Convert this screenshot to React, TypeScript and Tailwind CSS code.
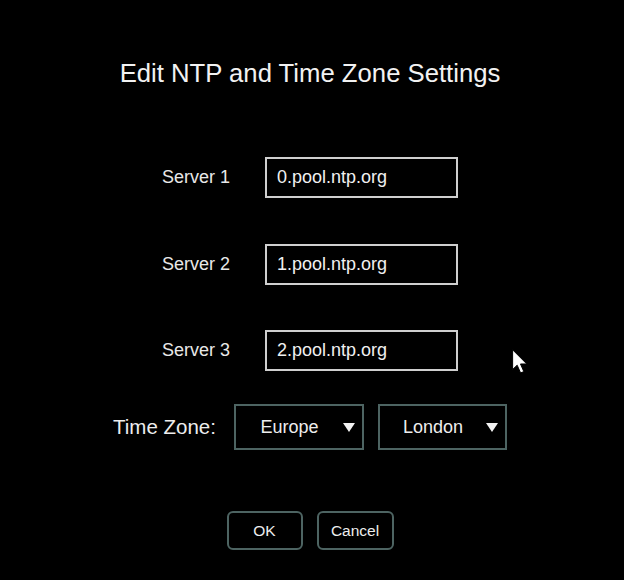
import React from "react";

const servers = ["0.pool.ntp.org", "1.pool.ntp.org", "2.pool.ntp.org"];

function Caret() {
  return (
    <svg width="12" height="9" viewBox="0 0 12 9" className="shrink-0">
      <path d="M0 0 H12 L6 9 Z" fill="#f2f2f2" />
    </svg>
  );
}

function Select({ label, width }: { label: string; width: string }) {
  return (
    <div className={`${width} h-[46px] border-2 border-[#4d6462] flex items-center`}>
      <span className="flex-1 text-center text-[18px] text-[#ededed]">{label}</span>
      <span className="mr-[7px]">
        <Caret />
      </span>
    </div>
  );
}

export default function App() {
  return (
    <div
      className="relative w-[624px] h-[580px] bg-black text-[#eeeeee] overflow-hidden"
      style={{ fontFamily: '"Liberation Sans", Arial, sans-serif' }}
    >
      <div className="w-[620px] flex flex-col items-center">
        <h1 className="mt-[57px] text-[25.7px] leading-[32px] text-[#f2f2f2]">
          Edit NTP and Time Zone Settings
        </h1>

        {servers.map((s, i) => (
          <div
            key={s}
            className={`flex items-center ${i === 0 ? "mt-[68px]" : i === 1 ? "mt-[46px]" : "mt-[45px]"}`}
          >
            <label className="w-[103px] text-[18px] text-[#e8e8e8]">Server {i + 1}</label>
            <input
              readOnly
              defaultValue={s}
              className="w-[193px] h-[41px] border-2 border-[#cfcfcf] bg-black pl-[10px] text-[18px] text-[#f0f0f0] outline-none"
            />
          </div>
        ))}

        <div className="mt-[33px] flex items-center">
          <span className="w-[121px] text-[20.5px] text-[#ededed]">Time Zone:</span>
          <Select label="Europe" width="w-[130px]" />
          <div className="w-[14px]" />
          <Select label="London" width="w-[129px]" />
        </div>

        <div className="mt-[61px] flex gap-[14px]">
          <button className="w-[76px] h-[39px] border-2 border-[#4d6462] rounded-[6px] text-[15.5px] text-[#ededed]">
            OK
          </button>
          <button className="w-[77px] h-[39px] border-2 border-[#4d6462] rounded-[6px] text-[15.5px] text-[#ededed]">
            Cancel
          </button>
        </div>
      </div>

      {/* mouse pointer */}
      <svg
        className="absolute left-[512px] top-[349px]"
        width="16"
        height="25"
        viewBox="0 0 13 20"
      >
        <path
          d="M0.5 0.5 V16.5 L4.2 13 L7 19.3 L9.6 18.2 L6.9 12 H12 Z"
          fill="#ffffff"
          stroke="#000000"
          strokeWidth="0.8"
          strokeLinejoin="round"
        />
      </svg>
    </div>
  );
}
